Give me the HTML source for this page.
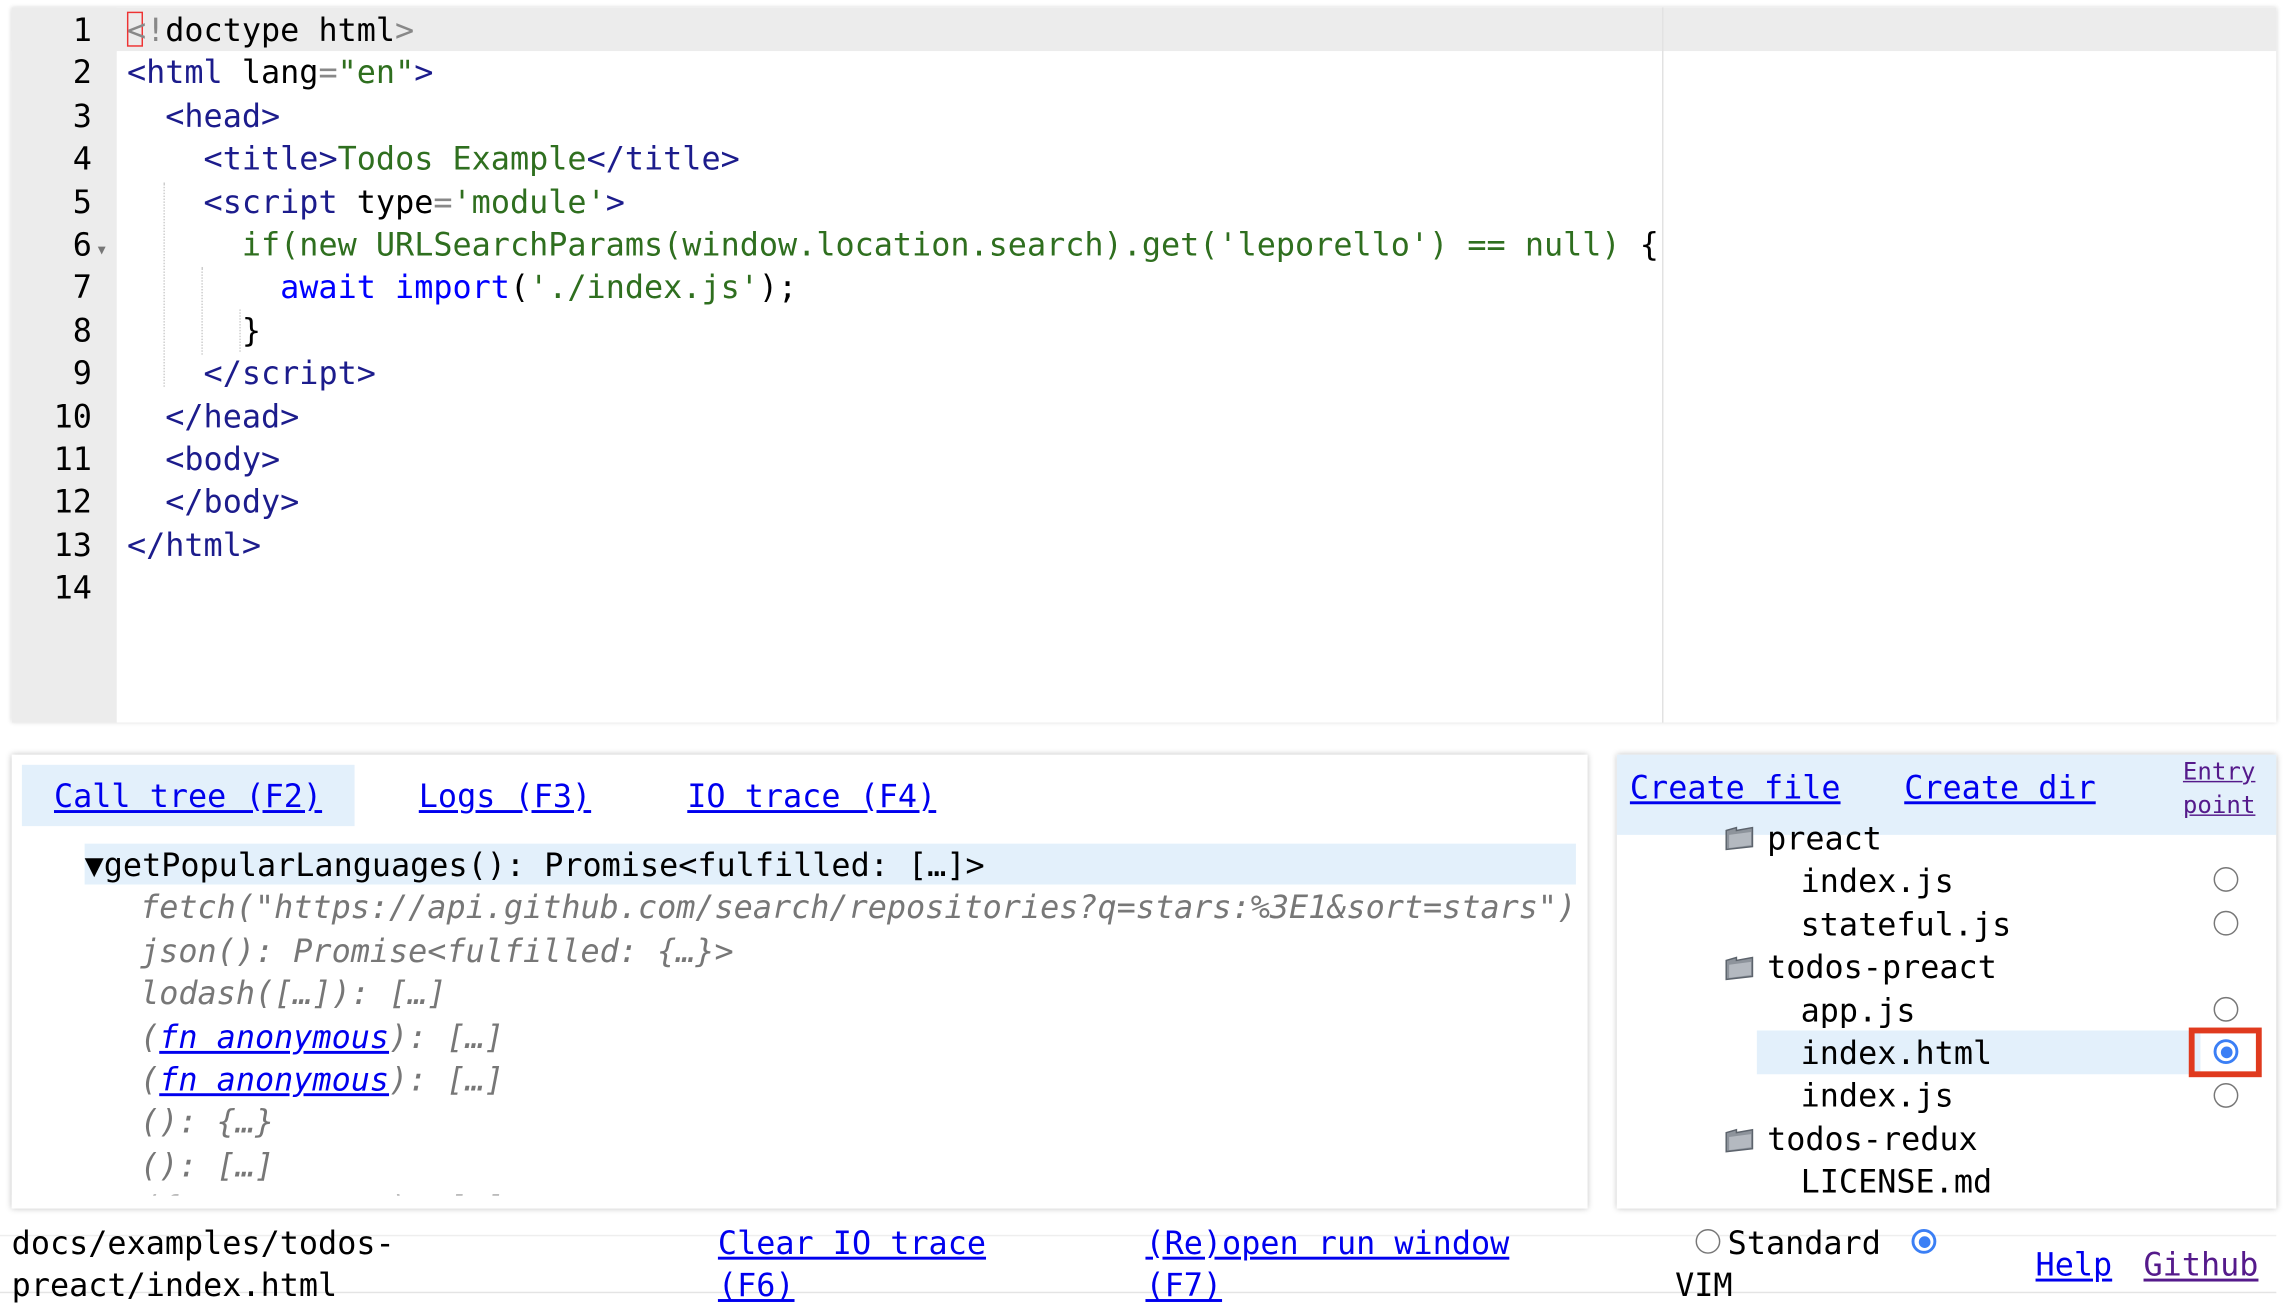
<!DOCTYPE html>
<html><head><meta charset="utf-8"><style>
html,body{margin:0;padding:0;background:#fff;overflow:hidden;width:2288px;height:1302px}
#s{position:absolute;left:0;top:0;width:1568px;height:892px;transform:scale(1.45918,1.4596);transform-origin:0 0;font-family:"DejaVu Sans Mono","Liberation Mono",monospace;font-size:21.8px;color:#000}
.a{position:absolute;white-space:pre}
#ed{left:8px;top:5px;width:1552px;height:490px;box-shadow:0 0 3px rgba(0,0,0,.18);background:#fff;overflow:hidden}
#gut{position:absolute;left:0;top:0;width:72px;height:490px;background:#ececec}
.ln{position:absolute;left:0;width:55px;text-align:right;height:29.4px;line-height:29.4px;transform:translateY(2px)}
.cl{position:absolute;left:79px;height:29.4px;line-height:29.4px;white-space:pre;transform:translateY(2px)}
.t{color:#1c1c8c}.s{color:#2f6f1f}.g{color:#888}.k{color:#0000ff}
.guide{position:absolute;width:0;border-left:1px dotted #ccc}
a{color:#0000ee;text-decoration:underline}
.v{color:#551a8b}
.panel{background:#fff;box-shadow:0 0 4px rgba(0,0,0,.25)}
.r{line-height:29.4px;height:29.4px;transform:translateY(2px)}
.tx{transform:translateY(2px)}
.it{color:#777;font-style:italic}
.rad{position:absolute;width:17px;height:17px;border:1.3px solid #777;border-radius:50%;background:#fff;box-sizing:border-box}
.radon{border:2px solid #3b7ff5}
.radon::after{content:"";position:absolute;left:2.5px;top:2.5px;width:8px;height:8px;border-radius:50%;background:#3b7ff5}
.fold{position:absolute;width:20px;height:18px}
</style></head><body><div id="s">
<div id="ed" class="a">
 <div id="gut"></div>
 <div style="position:absolute;left:0;top:0;width:1552px;height:30px;background:#ececec"></div>
 <div style="position:absolute;left:1131px;top:0;width:1px;height:490px;background:#e2e2e2"></div>
 <div class="guide" style="left:104px;top:120px;height:140px"></div>
 <div class="guide" style="left:130px;top:178px;height:60px"></div>
 <div class="guide" style="left:156px;top:207px;height:29px"></div>
 <div class="ln" style="top:0">1</div><div class="ln" style="top:29.4px">2</div><div class="ln" style="top:58.8px">3</div><div class="ln" style="top:88.2px">4</div><div class="ln" style="top:117.6px">5</div><div class="ln" style="top:147px">6</div><div class="ln" style="top:176.4px">7</div><div class="ln" style="top:205.8px">8</div><div class="ln" style="top:235.2px">9</div><div class="ln" style="top:264.6px">10</div><div class="ln" style="top:294px">11</div><div class="ln" style="top:323.4px">12</div><div class="ln" style="top:352.8px">13</div><div class="ln" style="top:382.2px">14</div>
 <div style="position:absolute;left:59px;top:162px;font-size:9px;color:#777">▼</div>
 <div style="position:absolute;left:79px;top:3px;width:11px;height:24px;border:1px solid #e33;box-sizing:border-box"></div>
 <div class="cl" style="top:0"><span class="g">&lt;!</span>doctype html<span class="g">&gt;</span></div>
 <div class="cl" style="top:29.4px"><span class="t">&lt;html</span> lang<span class="g">=</span><span class="s">"en"</span><span class="t">&gt;</span></div>
 <div class="cl" style="top:58.8px">  <span class="t">&lt;head&gt;</span></div>
 <div class="cl" style="top:88.2px">    <span class="t">&lt;title&gt;</span><span class="s">Todos Example</span><span class="t">&lt;/title&gt;</span></div>
 <div class="cl" style="top:117.6px">    <span class="t">&lt;script</span> type<span class="g">=</span><span class="s">'module'</span><span class="t">&gt;</span></div>
 <div class="cl" style="top:147px">      <span class="s">if(new URLSearchParams(window.location.search).get('leporello') == null)</span> {</div>
 <div class="cl" style="top:176.4px">        <span class="k">await</span> <span class="k">import</span>(<span class="s">'./index.js'</span>);</div>
 <div class="cl" style="top:205.8px">      }</div>
 <div class="cl" style="top:235.2px">    <span class="t">&lt;/script&gt;</span></div>
 <div class="cl" style="top:264.6px">  <span class="t">&lt;/head&gt;</span></div>
 <div class="cl" style="top:294px">  <span class="t">&lt;body&gt;</span></div>
 <div class="cl" style="top:323.4px">  <span class="t">&lt;/body&gt;</span></div>
 <div class="cl" style="top:352.8px"><span class="t">&lt;/html&gt;</span></div>
</div>

<div class="a panel" style="left:8px;top:517px;width:1080px;height:311px;overflow:hidden">
 <div class="a" style="left:7px;top:7px;width:228px;height:42px;background:#e3f0fb"></div>
 <div class="a tx" style="left:29px;top:13px;line-height:30px"><a>Call tree (F2)</a></div>
 <div class="a tx" style="left:279px;top:13px;line-height:30px"><a>Logs (F3)</a></div>
 <div class="a tx" style="left:463px;top:13px;line-height:30px"><a>IO trace (F4)</a></div>
 <div class="a" style="left:50px;top:61px;width:1022px;height:28px;background:#e3f0fb"></div>
 <div class="a r" style="left:50px;top:60px">▼getPopularLanguages(): Promise&lt;fulfilled: […]&gt;</div>
 <div class="a r it" style="left:88px;top:89.4px">fetch("https://api.github.com/search/repositories?q=stars:%3E1&amp;sort=stars")</div>
 <div class="a r it" style="left:88px;top:118.8px">json(): Promise&lt;fulfilled: {…}&gt;</div>
 <div class="a r it" style="left:88px;top:148.2px">lodash([…]): […]</div>
 <div class="a r it" style="left:88px;top:177.6px">(<a>fn anonymous</a>): […]</div>
 <div class="a r it" style="left:88px;top:207px">(<a>fn anonymous</a>): […]</div>
 <div class="a r it" style="left:88px;top:236.4px">(): {…}</div>
 <div class="a r it" style="left:88px;top:265.8px">(): […]</div>
 <div class="a r it" style="left:88px;top:295.2px">(fn anonymous): […]</div>
 <div class="a" style="left:0;top:302px;width:1080px;height:9px;background:#fff"></div>
</div>

<div class="a panel" style="left:1108px;top:517px;width:452px;height:311px;overflow:hidden">
 <div class="a" style="left:0;top:0;width:452px;height:55px;background:#e3f0fb"></div>
 <div class="a tx" style="left:9px;top:7px;line-height:30px"><a>Create file</a></div>
 <div class="a tx" style="left:197px;top:7px;line-height:30px"><a>Create dir</a></div>
 <div class="a" style="left:388px;top:0px;font-size:16.5px;line-height:23px;text-align:right"><a class="v">Entry</a><br><a class="v">point</a></div>
 <div class="a" style="left:96px;top:189px;width:304px;height:30px;background:#e3f0fb"></div>
 <div class="a" style="left:392px;top:187px;width:50px;height:34px;box-sizing:border-box;border:4px solid #e03a1e"></div>
 <div class="fold" style="left:74px;top:47px"><svg width="20" height="18"><path d="M1 4 L8 2 L8 4 L19 2 L19 15 L1 17Z" fill="#8d939b" stroke="#5c636c" stroke-width="1"/><path d="M3 7 L18 5 L18 14 L3 16Z" fill="#b4b9c0"/></svg></div>
 <div class="fold" style="left:74px;top:136px"><svg width="20" height="18"><path d="M1 4 L8 2 L8 4 L19 2 L19 15 L1 17Z" fill="#8d939b" stroke="#5c636c" stroke-width="1"/><path d="M3 7 L18 5 L18 14 L3 16Z" fill="#b4b9c0"/></svg></div>
 <div class="fold" style="left:74px;top:254px"><svg width="20" height="18"><path d="M1 4 L8 2 L8 4 L19 2 L19 15 L1 17Z" fill="#8d939b" stroke="#5c636c" stroke-width="1"/><path d="M3 7 L18 5 L18 14 L3 16Z" fill="#b4b9c0"/></svg></div>
 <div class="a r" style="left:103px;top:42px">preact</div>
 <div class="a r" style="left:126px;top:71.4px">index.js</div>
 <div class="a r" style="left:126px;top:100.8px">stateful.js</div>
 <div class="a r" style="left:103px;top:130.2px">todos-preact</div>
 <div class="a r" style="left:126px;top:159.6px">app.js</div>
 <div class="a r" style="left:126px;top:189px">index.html</div>
 <div class="a r" style="left:126px;top:218.4px">index.js</div>
 <div class="a r" style="left:103px;top:247.8px">todos-redux</div>
 <div class="a r" style="left:126px;top:277.2px">LICENSE.md</div>
 <div class="rad" style="left:409px;top:77px"></div>
 <div class="rad" style="left:409px;top:106.5px"></div>
 <div class="rad" style="left:409px;top:165.5px"></div>
 <div class="rad radon" style="left:409px;top:195px"></div>
 <div class="rad" style="left:409px;top:224.5px"></div>
</div>

<div class="a" style="left:0;top:846px;width:1560px;height:38px;border-top:1px solid #eee;border-bottom:1px solid #e4e4e4"></div>
<div class="a tx" style="left:8px;top:836px;line-height:29.4px">docs/examples/todos-<br>preact/index.html</div>
<div class="a tx" style="left:492px;top:836px;line-height:29.4px"><a>Clear IO trace</a><br><a>(F6)</a></div>
<div class="a tx" style="left:785px;top:836px;line-height:29.4px"><a>(Re)open run window</a><br><a>(F7)</a></div>
<div class="rad" style="left:1162px;top:842px"></div>
<div class="a tx" style="left:1184px;top:836px;line-height:29.4px">Standard</div>
<div class="rad radon" style="left:1310px;top:842px"></div>
<div class="a tx" style="left:1148px;top:865px;line-height:29.4px">VIM</div>
<div class="a tx" style="left:1395px;top:851px;line-height:29.4px"><a>Help</a></div>
<div class="a tx" style="left:1469px;top:851px;line-height:29.4px"><a class="v">Github</a></div>
</div></body></html>
